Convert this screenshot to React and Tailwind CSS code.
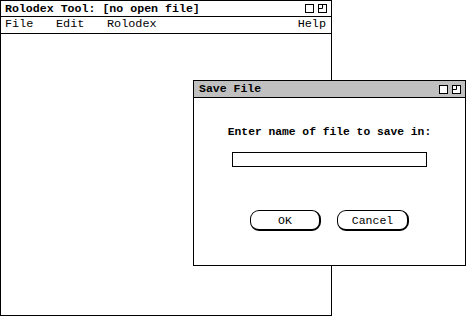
const mono = { fontFamily: '"Liberation Mono", "DejaVu Sans Mono", monospace' };

function WinIcons() {
  return (
    <div className="flex items-center gap-[4px]">
      <svg width="9" height="9" viewBox="0 0 9 9">
        <rect x="0.5" y="0.5" width="8" height="8" fill="white" stroke="black" />
      </svg>
      <svg width="9" height="9" viewBox="0 0 9 9">
        <rect x="0.5" y="0.5" width="8" height="8" fill="white" stroke="black" />
        <path d="M0.5 4.5 H4.5 V0.5" fill="none" stroke="black" />
      </svg>
    </div>
  );
}

function Button({ label, width }) {
  return (
    <button
      className={`h-[21px] ${width} border border-black border-b-2 border-r-2 rounded-[9px] bg-white text-[11.5px] text-black leading-none`}
      style={mono}
    >
      {label}
    </button>
  );
}

export default function App() {
  return (
    <div className="relative w-[467px] h-[317px] bg-white overflow-hidden" style={mono}>
      {/* main window */}
      <div className="absolute left-0 top-0 w-[332px] h-[316px] border border-black flex flex-col">
        <div className="h-[16px] border-b border-black flex items-center justify-between pl-[4px] pr-[4px]">
          <span className="text-[11.6px] font-bold text-black leading-none">Rolodex Tool: [no open file]</span>
          <WinIcons />
        </div>
        <div className="h-[17px] border-b border-black flex items-center pl-[4px] pr-[5px] text-[11.8px] text-black leading-none">
          <span className="w-[51px]">File</span>
          <span className="w-[51px]">Edit</span>
          <span>Rolodex</span>
          <span className="ml-auto">Help</span>
        </div>
        <div className="flex-1" />
      </div>

      {/* save dialog */}
      <div className="absolute left-[193px] top-[80px] w-[273px] h-[186px] border border-black bg-white flex flex-col">
        <div className="h-[17px] bg-[#c0c0c0] border-b border-black flex items-center justify-between pl-[5px] pr-[4px]">
          <span className="text-[11.5px] font-bold text-black leading-none">Save File</span>
          <WinIcons />
        </div>
        <div className="flex flex-col items-center">
          <div className="mt-[29px] text-[11.3px] font-bold text-black leading-none">Enter name of file to save in:</div>
          <div className="mt-[14px] w-[195px] h-[15px] border border-black" />
          <div className="mt-[43px] flex gap-[16px]">
            <Button label="OK" width="w-[71px]" />
            <Button label="Cancel" width="w-[72px]" />
          </div>
        </div>
      </div>
    </div>
  );
}
